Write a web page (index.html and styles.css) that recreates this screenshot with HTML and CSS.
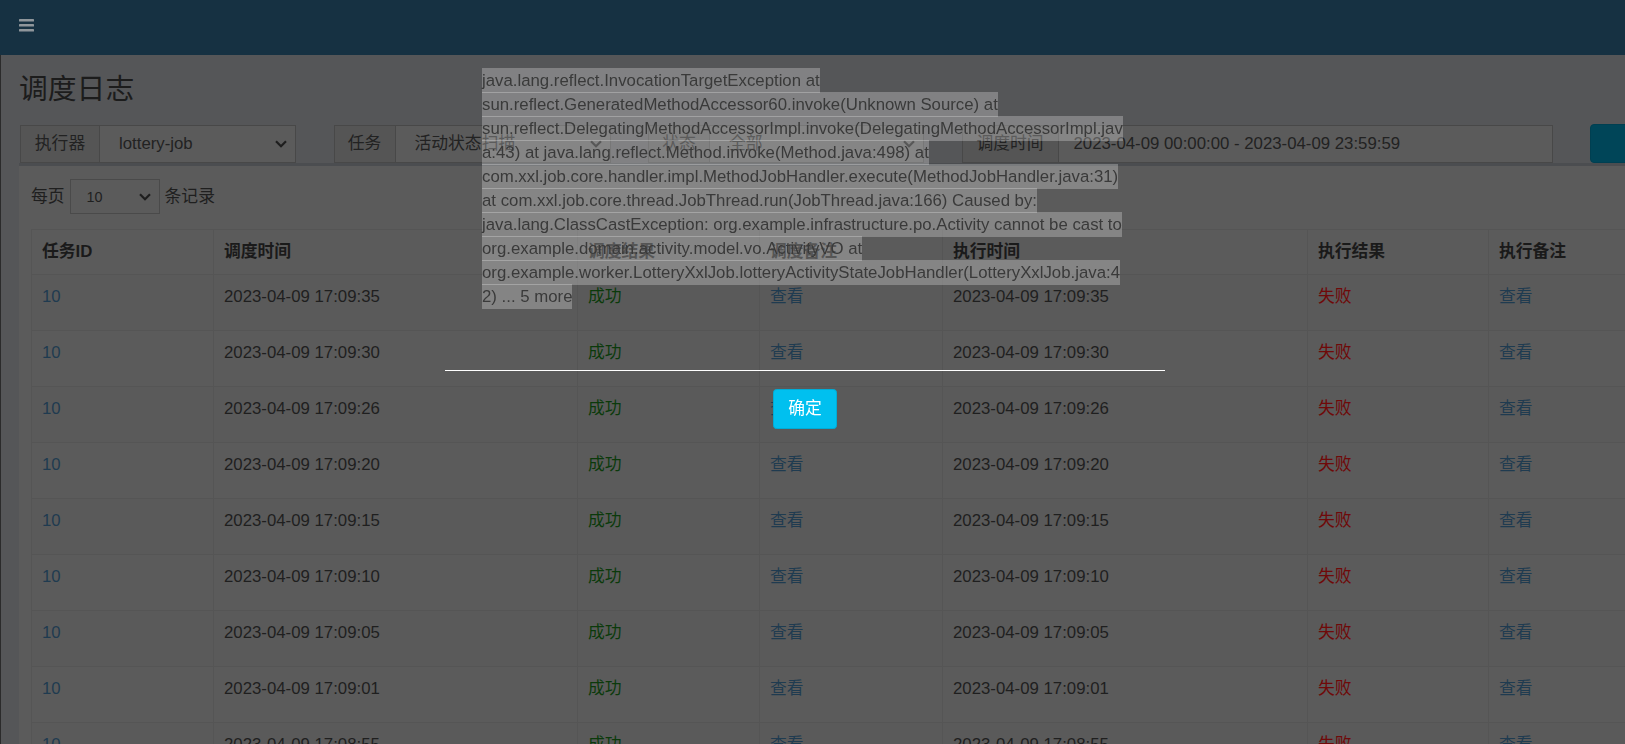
FILE: index.html
```html
<!DOCTYPE html>
<html lang="zh-CN">
<head>
<meta charset="utf-8">
<title>调度日志</title>
<link rel="stylesheet" href="styles.css">
</head>
<body>
<header class="navbar">
  <svg class="toggle" width="15" height="13" viewBox="0 0 15 13"><rect x="0" y="0" width="15" height="2.6" rx="0.6"/><rect x="0" y="5" width="15" height="2.6" rx="0.6"/><rect x="0" y="10" width="15" height="2.6" rx="0.6"/></svg>
</header>
<main class="wrapper">
  <h1 class="title">调度日志</h1>
  <div class="filters">
    <div class="group g1"><span class="addon">执行器</span><div class="field"><span>lottery-job</span><svg class="chev" width="12" height="8" viewBox="0 0 12 8"><polyline points="1,1.2 6,6.2 11,1.2"/></svg></div></div>
    <div class="group g2"><span class="addon">任务</span><div class="field"><span>活动状态扫描</span><svg class="chev" width="12" height="8" viewBox="0 0 12 8"><polyline points="1,1.2 6,6.2 11,1.2"/></svg></div></div>
    <div class="group g3"><span class="addon">状态</span><div class="field"><span>全部</span><svg class="chev" width="12" height="8" viewBox="0 0 12 8"><polyline points="1,1.2 6,6.2 11,1.2"/></svg></div></div>
    <div class="group g4"><span class="addon">调度时间</span><div class="field date"><span>2023-04-09 00:00:00 - 2023-04-09 23:59:59</span></div></div>
    <div class="search">搜索</div>
  </div>
  <section class="box">
    <div class="length">每页 <div class="sel-sm"><span>10</span><svg class="chev" width="12" height="8" viewBox="0 0 12 8"><polyline points="1,1.2 6,6.2 11,1.2"/></svg></div> 条记录</div>
    <table class="grid">
      <colgroup><col class="c1"><col class="c2"><col class="c3"><col class="c4"><col class="c5"><col class="c6"><col class="c7"></colgroup>
      <thead><tr><th>任务ID</th><th>调度时间</th><th>调度结果</th><th>调度备注</th><th>执行时间</th><th>执行结果</th><th>执行备注</th></tr></thead>
      <tbody>
        <tr><td class="link">10</td><td>2023-04-09 17:09:35</td><td class="ok">成功</td><td class="link">查看</td><td>2023-04-09 17:09:35</td><td class="fail">失败</td><td class="link">查看</td></tr>
        <tr><td class="link">10</td><td>2023-04-09 17:09:30</td><td class="ok">成功</td><td class="link">查看</td><td>2023-04-09 17:09:30</td><td class="fail">失败</td><td class="link">查看</td></tr>
        <tr><td class="link">10</td><td>2023-04-09 17:09:26</td><td class="ok">成功</td><td class="link">查看</td><td>2023-04-09 17:09:26</td><td class="fail">失败</td><td class="link">查看</td></tr>
        <tr><td class="link">10</td><td>2023-04-09 17:09:20</td><td class="ok">成功</td><td class="link">查看</td><td>2023-04-09 17:09:20</td><td class="fail">失败</td><td class="link">查看</td></tr>
        <tr><td class="link">10</td><td>2023-04-09 17:09:15</td><td class="ok">成功</td><td class="link">查看</td><td>2023-04-09 17:09:15</td><td class="fail">失败</td><td class="link">查看</td></tr>
        <tr><td class="link">10</td><td>2023-04-09 17:09:10</td><td class="ok">成功</td><td class="link">查看</td><td>2023-04-09 17:09:10</td><td class="fail">失败</td><td class="link">查看</td></tr>
        <tr><td class="link">10</td><td>2023-04-09 17:09:05</td><td class="ok">成功</td><td class="link">查看</td><td>2023-04-09 17:09:05</td><td class="fail">失败</td><td class="link">查看</td></tr>
        <tr><td class="link">10</td><td>2023-04-09 17:09:01</td><td class="ok">成功</td><td class="link">查看</td><td>2023-04-09 17:09:01</td><td class="fail">失败</td><td class="link">查看</td></tr>
        <tr><td class="link">10</td><td>2023-04-09 17:08:55</td><td class="ok">成功</td><td class="link">查看</td><td>2023-04-09 17:08:55</td><td class="fail">失败</td><td class="link">查看</td></tr>
      </tbody>
    </table>
  </section>
</main>
<div class="overlay">
  <div class="dialog">
    <div class="msg"><span>java.lang.reflect.InvocationTargetException at sun.reflect.GeneratedMethodAccessor60.invoke(Unknown Source) at sun.reflect.DelegatingMethodAccessorImpl.invoke(DelegatingMethodAccessorImpl.java:43) at java.lang.reflect.Method.invoke(Method.java:498) at com.xxl.job.core.handler.impl.MethodJobHandler.execute(MethodJobHandler.java:31) at com.xxl.job.core.thread.JobThread.run(JobThread.java:166) Caused by: java.lang.ClassCastException: org.example.infrastructure.po.Activity cannot be cast to org.example.domain.activity.model.vo.ActivityVO at org.example.worker.LotteryXxlJob.lotteryActivityStateJobHandler(LotteryXxlJob.java:42) ... 5 more</span></div>
    <div class="btns"><button class="confirm" type="button">确定</button></div>
  </div>
</div>
</body>
</html>
```
FILE: styles.css
```css
* { box-sizing: border-box; }
html, body {
  margin: 0;
  padding: 0;
  width: 1625px;
  height: 744px;
  overflow: hidden;
}
body {
  font-family: "Liberation Sans", "Noto Sans CJK SC", sans-serif;
  font-size: 16.8px;
  line-height: 24px;
  color: #1f1f1f;
  background: #555658;
}
.navbar {
  height: 55px;
  background: #163142;
  padding: 19px 0 0 19px;
}
.toggle { display: block; fill: #8f969b; }
.wrapper {
  border-left: 1px solid #2b2b2b;
  padding: 18px 0 0 18px;
  width: 1720px;
  height: 689px;
}
.title {
  margin: 0;
  font-size: 28.8px;
  line-height: 32px;
  font-weight: normal;
  color: #1c1c1c;
}
.filters {
  display: flex;
  gap: 37.5px;
  margin: 20px 0 0 1px;
  height: 38px;
}
.group { display: flex; height: 38px; }
.g1 { width: 276px; }
.g2 { width: 277px; }
.g3 { width: 276px; }
.g4 { width: 591px; }
.addon {
  flex: none;
  border: 1px solid #484848;
  background: #555555;
  display: flex;
  align-items: center;
  justify-content: center;
  color: #222;
  white-space: nowrap;
}
.g1 .addon { width: 80px; }
.g2 .addon, .g3 .addon { width: 62px; }
.g4 .addon { width: 97px; }
.field {
  flex: 1;
  min-width: 0;
  border: 1px solid #484848;
  border-left: 0;
  background: #5b5b5b;
  display: flex;
  align-items: center;
  justify-content: space-between;
  padding: 0 8px 0 19px;
  color: #222;
  white-space: nowrap;
  overflow: hidden;
}
.field.date { padding-left: 15px; }
.chev { flex: none; fill: none; stroke: #1e1e1e; stroke-width: 2.2; }
.search {
  flex: none;
  width: 130px;
  height: 39px;
  margin-top: -1px;
  background: #004558;
  border: 1px solid #003f51;
  border-radius: 4px;
  color: #5c5c5c;
  display: flex;
  align-items: center;
  justify-content: center;
}
.box {
  border-top: 3px solid #4b4d50;
  background: #5b5b5b;
  padding: 13px 12px 0;
  width: 1663px;
  height: 600px;
}
.length {
  display: flex;
  align-items: center;
  height: 35px;
  gap: 5px;
  color: #1f1f1f;
}
.sel-sm {
  width: 90px;
  height: 35px;
  border: 1px solid #4a4a4a;
  display: flex;
  align-items: center;
  justify-content: space-between;
  padding: 0 8px 0 16px;
  font-size: 14.4px;
}
.grid {
  margin-top: 15px;
  border-collapse: collapse;
  table-layout: fixed;
  width: 1639px;
}
.c1 { width: 182px; }
.c2 { width: 364px; }
.c3 { width: 182px; }
.c4 { width: 183px; }
.c5 { width: 365px; }
.c6 { width: 181px; }
.c7 { width: 182px; }
.grid th, .grid td {
  border: 1px solid #555555;
  text-align: left;
  vertical-align: top;
  padding: 10px 10px 0;
  white-space: nowrap;
  overflow: hidden;
}
.grid th {
  height: 45px;
  font-weight: bold;
  color: #1a1a1a;
}
.grid tbody tr { height: 56px; }
.grid tbody tr:nth-child(odd) td { background: #5a5a5a; }
.link { color: #1f3b50; }
.ok { color: #0b3a0b; }
.fail { color: #6f0909; }
.overlay {
  position: fixed;
  inset: 0;
}
.dialog {
  position: absolute;
  left: 445px;
  top: 69px;
  width: 720px;
}
.msg {
  height: 302px;
  border-bottom: 1px solid #ffffff;
  padding: 0 38px 0 37px;
  overflow-wrap: break-word;
  color: #3a3a3a;
}
.msg span {
  background: rgba(255, 255, 255, 0.26);
  padding: 2.6px 0;
}
.btns {
  text-align: center;
  padding-top: 18px;
}
.confirm {
  height: 40px;
  padding: 0 14px;
  background: #00c0ef;
  border: 1px solid #00acd6;
  border-radius: 3.6px;
  color: #ffffff;
  font-family: inherit;
  font-size: 16.8px;
  line-height: 38px;
}
```
